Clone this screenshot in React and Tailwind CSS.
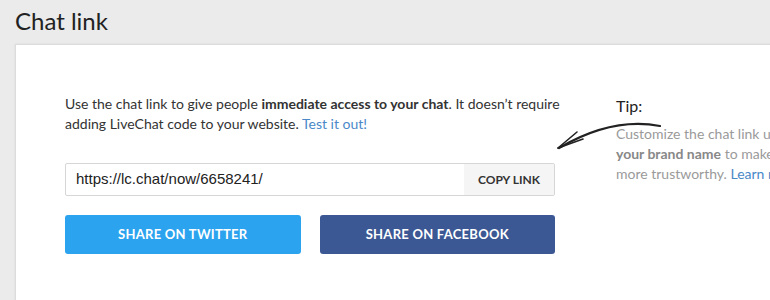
import React from "react";

const Arrow = () => (
  <svg width="115" height="40" viewBox="0 0 115 40" className="absolute left-[536px] top-[74px]">
    <path d="M108 7 C 82 2, 48 5, 7 29" fill="none" stroke="#222" strokeWidth="2.2" strokeLinecap="round" />
    <path d="M6 29 L 25 13" fill="none" stroke="#222" strokeWidth="1.6" strokeLinecap="round" />
    <path d="M6 29 L 31 20" fill="none" stroke="#222" strokeWidth="1.6" strokeLinecap="round" />
  </svg>
);

export default function App() {
  return (
    <div className="w-[770px] h-[300px] overflow-hidden bg-[#ebebeb] font-['Lato',sans-serif]">
      {/* Heading */}
      <h1 className="pl-[15px] pt-[5px] h-[44px] text-[24px] leading-[32px] text-[#222]">Chat link</h1>

      {/* Card */}
      <div className="relative ml-[15px] w-[780px] h-[300px] bg-white border border-[#dcdcdc] shadow-[0_0_2px_rgba(0,0,0,0.08)]">
        <div className="flex pt-[49px] pl-[49px]">
          <div className="w-[490px]">
            <p className="text-[14px] leading-[20px] text-[#333] whitespace-nowrap">
              Use the chat link to give people <b className="font-bold">immediate access to your chat</b>. It doesn’t require
              <br />
              adding LiveChat code to your website. <a className="text-[#4a88c8]">Test it out!</a>
            </p>

            {/* Link input */}
            <div className="mt-[29px] flex h-[33px] border border-[#d6d6d6] rounded-[2px] overflow-hidden">
              <div className="flex-1 flex items-center pl-[10px] text-[15px] text-[#222] font-['Liberation_Sans',sans-serif]">
                https://lc.chat/now/6658241/
              </div>
              <button className="w-[90px] bg-[#f5f5f5] text-[12px] font-bold text-[#333]">COPY LINK</button>
            </div>

            {/* Share buttons */}
            <div className="mt-[19px] flex gap-[19px]">
              <button className="w-[236px] h-[39px] rounded-[3px] bg-[#2ba3ee] text-white text-[13px] font-bold tracking-[0.02em]">
                SHARE ON TWITTER
              </button>
              <button className="w-[236px] h-[39px] rounded-[3px] bg-[#3b5894] text-white text-[13px] font-bold tracking-[0.02em]">
                SHARE ON FACEBOOK
              </button>
            </div>
          </div>

          {/* Tip */}
          <div className="ml-[61px] pt-[2px] w-[200px] whitespace-nowrap">
            <div className="text-[16px] leading-[20px] text-[#222]">Tip:</div>
            <p className="mt-[8px] text-[14px] leading-[20px] text-[#9a9a9a]">
              Customize the chat link using<br />
              <b className="font-bold text-[#888]">your brand name</b> to make it<br />
              more trustworthy. <a className="text-[#4a88c8]">Learn more</a>
            </p>
          </div>
        </div>
        <Arrow />
      </div>
    </div>
  );
}
